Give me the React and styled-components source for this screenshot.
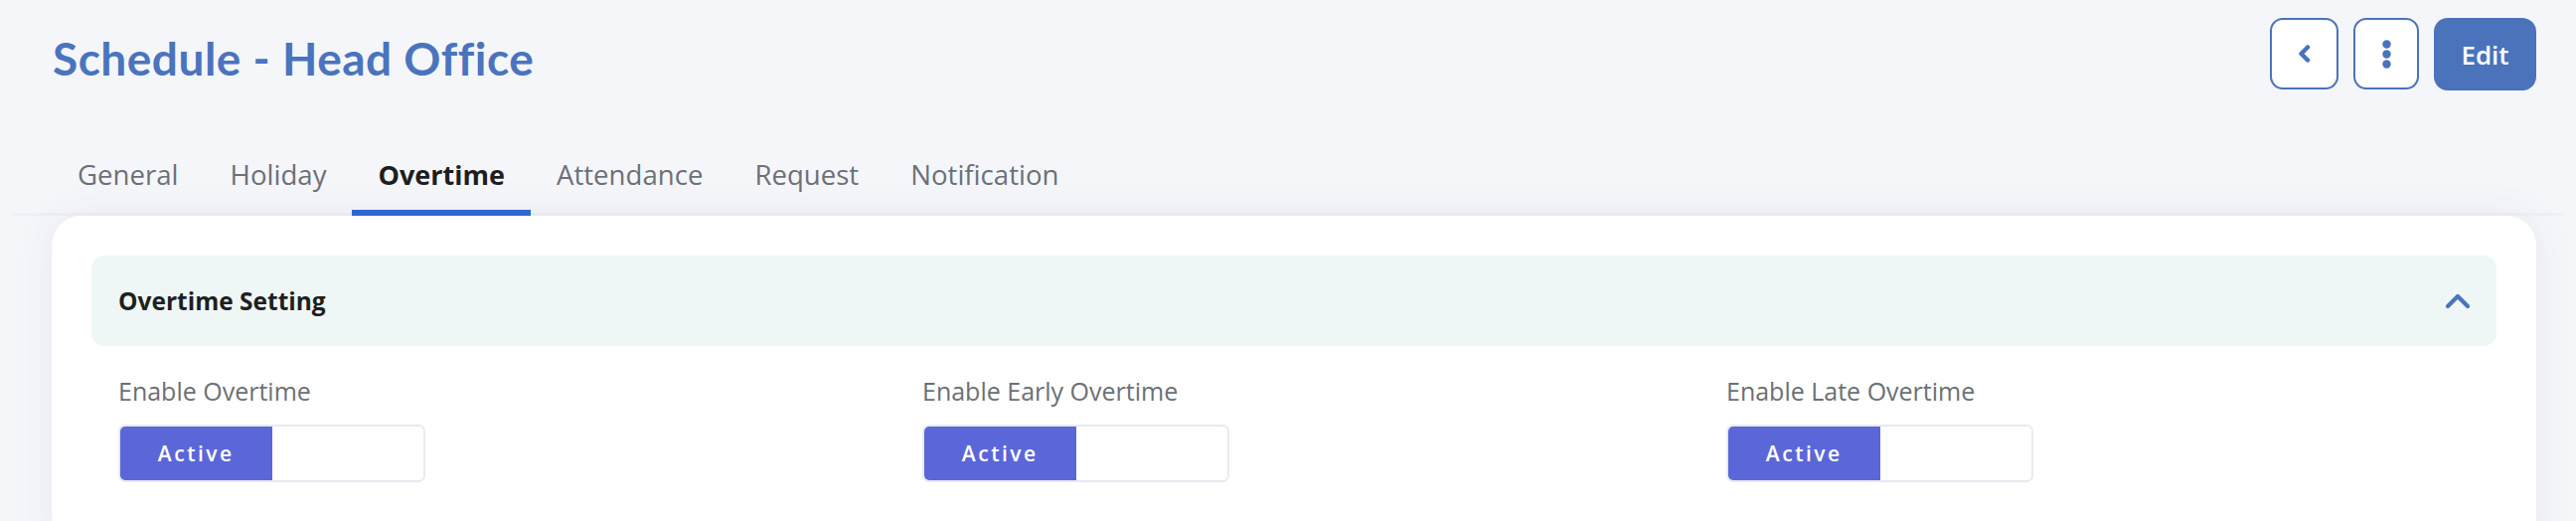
import React, { useState } from 'react';
import styled, { createGlobalStyle } from 'styled-components';

const GlobalStyle = createGlobalStyle`
  body {
    margin: 0;
    background-color: #F5F6FA;
    font-family: "Open Sans", "Liberation Sans", sans-serif;
  }
`;

const Page = styled.div`
  padding: 18px 40px 0 52px;
  overflow: hidden;
`;

const Header = styled.div`
  display: flex;
  justify-content: space-between;
  align-items: center;
  height: 73px;
`;

const Title = styled.h1`
  margin: 9px 0 0;
  font-family: Lato, "Open Sans", sans-serif;
  font-size: 46px;
  font-weight: 700;
  letter-spacing: 0.5px;
  line-height: 1;
  color: #4A74BD;
  padding-left: 1px;
`;

const Actions = styled.div`
  display: flex;
  gap: 15px;
`;

const IconButton = styled.button`
  width: ${(p) => p.$width}px;
  height: 72px;
  display: flex;
  align-items: center;
  justify-content: center;
  background: #fff;
  border: 2px solid #4A73BD;
  border-radius: 13px;
  padding: 0;
  cursor: pointer;
`;

const EditButton = styled.button`
  width: 103px;
  height: 73px;
  background-color: #4A73BB;
  color: #fff;
  border: none;
  border-radius: 14px;
  font-family: "Open Sans", sans-serif;
  font-size: 26px;
  font-weight: 600;
  cursor: pointer;
`;

const TabBar = styled.div`
  display: flex;
  margin: 67px -28px 0 -40px;
  padding-left: 40px;
  border-bottom: 3px solid #EEF0F5;
`;

const Tab = styled.div`
  padding: 1px 26px 19px 26px;
  margin-bottom: -3px;
  font-size: ${(p) => (p.$active ? 27 : 27.6)}px;
  line-height: 33px;
  font-weight: ${(p) => (p.$active ? 700 : 400)};
  color: ${(p) => (p.$active ? '#1E1E1E' : '#6C7177')};
  border-bottom: 6px solid ${(p) => (p.$active ? '#3066D4' : 'transparent')};
  cursor: pointer;
`;

const Card = styled.div`
  background: #fff;
  border-radius: 30px;
  padding: 40px 40px 80px;
  box-shadow: 0 0 40px rgba(60, 70, 120, 0.07);
`;

const AccordionHeader = styled.div`
  display: flex;
  justify-content: space-between;
  align-items: center;
  height: 91px;
  padding: 0 26px 0 27px;
  background-color: #EEF7F5;
  border-radius: 13px;
`;

const AccordionTitle = styled.span`
  font-size: 24.5px;
  font-weight: 700;
  color: #1F1F1F;
`;

const Fields = styled.div`
  display: grid;
  grid-template-columns: repeat(3, 1fr);
  column-gap: 61px;
  padding: 30px 27px 0;
`;

const Field = styled.div`
  display: flex;
  flex-direction: column;
  align-items: flex-start;
`;

const Label = styled.div`
  font-size: 25px;
  line-height: 30px;
  color: #6B7075;
  margin-bottom: 19px;
`;

const Toggle = styled.div`
  display: flex;
  width: 309px;
  height: 58px;
  box-sizing: border-box;
  border: 2px solid #E9E9F1;
  border-radius: 7px;
  overflow: hidden;
`;

const ToggleOption = styled.div`
  flex: 1;
  display: flex;
  align-items: center;
  justify-content: center;
  background-color: ${(p) => (p.$on ? '#5B67D8' : '#fff')};
  color: #fff;
  font-size: 21px;
  font-weight: 600;
  letter-spacing: 2.5px;
  cursor: pointer;
`;

const tabs = ['General', 'Holiday', 'Overtime', 'Attendance', 'Request', 'Notification'];
const fields = ['Enable Overtime', 'Enable Early Overtime', 'Enable Late Overtime'];

const App = () => {
  const [activeTab, setActiveTab] = useState('Overtime');

  return (
    <Page>
      <GlobalStyle />
      <Header>
        <Title>Schedule - Head Office</Title>
        <Actions>
          <IconButton $width={69} aria-label="Back">
            <svg width="14" height="18" viewBox="0 0 14 18" fill="none">
              <polyline points="10,2.5 3.5,9 10,15.5" stroke="#4A73BD" strokeWidth="4.5" strokeLinecap="round" strokeLinejoin="round" />
            </svg>
          </IconButton>
          <IconButton $width={66} aria-label="More">
            <svg width="9" height="29" viewBox="0 0 9 29" fill="#4A73BD">
              <circle cx="4.5" cy="4.5" r="4.2" />
              <circle cx="4.5" cy="14.5" r="4.2" />
              <circle cx="4.5" cy="24.5" r="4.2" />
            </svg>
          </IconButton>
          <EditButton>Edit</EditButton>
        </Actions>
      </Header>

      <TabBar>
        {tabs.map((t) => (
          <Tab key={t} $active={t === activeTab} onClick={() => setActiveTab(t)}>
            {t}
          </Tab>
        ))}
      </TabBar>

      <Card>
        <AccordionHeader>
          <AccordionTitle>Overtime Setting</AccordionTitle>
          <svg width="26" height="17" viewBox="0 0 26 17" fill="none">
            <polyline points="3,14 13,4 23,14" stroke="#4A73BD" strokeWidth="4.2" strokeLinecap="round" strokeLinejoin="round" />
          </svg>
        </AccordionHeader>
        <Fields>
          {fields.map((f) => (
            <Field key={f}>
              <Label>{f}</Label>
              <Toggle>
                <ToggleOption $on>Active</ToggleOption>
                <ToggleOption />
              </Toggle>
            </Field>
          ))}
        </Fields>
      </Card>
    </Page>
  );
};

export default App;
